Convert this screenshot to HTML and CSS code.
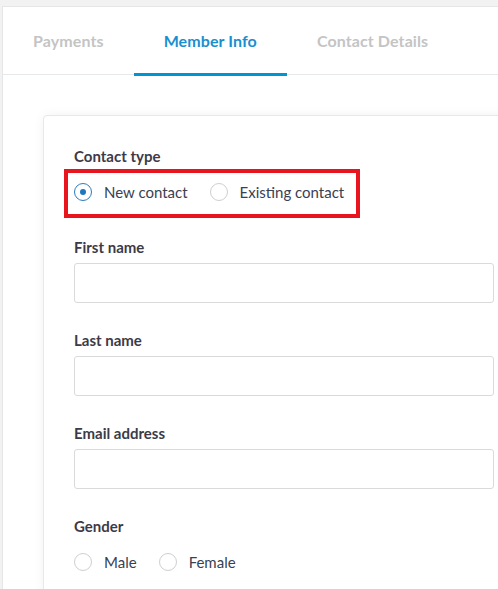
FILE: index.html
```html
<!DOCTYPE html>
<html>
<head>
<meta charset="utf-8">
<link rel="stylesheet" href="styles.css">
</head>
<body>
<div class="panel">
  <div class="tabs">
    <div class="tab">Payments</div>
    <div class="tab active">Member Info</div>
    <div class="tab">Contact Details</div>
  </div>
  <div class="content">
    <div class="card">
      <div class="group group-radio">
        <div class="label">Contact type</div>
        <div class="radios highlight">
          <label class="radio"><span class="circle checked"></span><span class="rtext">New contact</span></label>
          <label class="radio"><span class="circle"></span><span class="rtext">Existing contact</span></label>
        </div>
      </div>
      <div class="group">
        <div class="label">First name</div>
        <div class="input"></div>
      </div>
      <div class="group">
        <div class="label">Last name</div>
        <div class="input"></div>
      </div>
      <div class="group">
        <div class="label">Email address</div>
        <div class="input"></div>
      </div>
      <div class="group group-radio">
        <div class="label">Gender</div>
        <div class="radios">
          <label class="radio"><span class="circle"></span><span class="rtext">Male</span></label>
          <label class="radio"><span class="circle"></span><span class="rtext">Female</span></label>
        </div>
      </div>
    </div>
  </div>
</div>
</body>
</html>
```

FILE: styles.css
```css
html, body {
  margin: 0;
  padding: 0;
  overflow: hidden;
  height: 100%;
}
body {
  background: #f2f2f2;
  font-family: Lato, "Open Sans", sans-serif;
}
.panel {
  margin: 6px 0 0 2px;
  width: 700px;
  height: 700px;
  background: #fff;
  border: 1px solid #e6e6e6;
  border-right: none;
}
.tabs {
  display: flex;
  height: 67px;
  border-bottom: 1px solid #e6e9ec;
}
.tab {
  box-sizing: border-box;
  height: 69px;
  flex: none;
  display: flex;
  align-items: center;
  padding: 1px 30px 0;
  border-bottom: 3px solid transparent;
  font-size: 16px;
  font-weight: 700;
  letter-spacing: 0.1px;
  color: #c4c4c4;
}
.tab.active {
  color: #1a8fcf;
  border-bottom-color: #0094d3;
}
.content {
  padding: 40px 0 0 40px;
}
.card {
  width: 420px;
  padding: 30px 30px 30px;
  border: 1px solid #e8e8e8;
  border-radius: 4px;
  box-shadow: 0 0 12px rgba(0, 0, 0, 0.05);
  background: #fff;
}
.group {
  margin-bottom: 27px;
}
.group-radio {
  margin-bottom: 33px;
}
.label {
  font-size: 15px;
  font-weight: 700;
  line-height: 20px;
  color: #3b3b48;
  margin-bottom: 6px;
}
.group-radio .label {
  margin-bottom: 16px;
}
.input {
  box-sizing: border-box;
  height: 40px;
  border: 1px solid #dadada;
  border-radius: 3px;
}
.radios {
  display: inline-flex;
  align-items: center;
  height: 20px;
  position: relative;
}
.highlight::after {
  content: "";
  position: absolute;
  left: -10px;
  right: -16px;
  top: -13px;
  bottom: -16px;
  border: 4px solid #e8141e;
}
.radio {
  display: inline-flex;
  align-items: center;
  margin-right: 22px;
}
.radio:last-child {
  margin-right: 0;
}
.circle {
  box-sizing: border-box;
  width: 18px;
  height: 18px;
  border-radius: 50%;
  border: 1px solid #cfcfcf;
  background: #fff;
  margin-right: 12px;
  position: relative;
  flex: none;
}
.circle.checked {
  border-color: #2b7dbf;
}
.circle.checked::after {
  content: "";
  position: absolute;
  left: 50%;
  top: 50%;
  width: 6px;
  height: 6px;
  margin: -3px 0 0 -3px;
  border-radius: 50%;
  background: #1f78bd;
}
.rtext {
  font-size: 15px;
  line-height: 20px;
  color: #394152;
}
```
